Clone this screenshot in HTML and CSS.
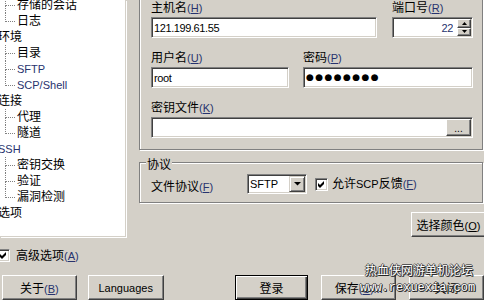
FILE: index.html
```html
<!DOCTYPE html>
<html lang="zh-CN">
<head>
    <meta charset="UTF-8">
    <meta name="viewport" content="width=device-width, initial-scale=1.0">
    <title>WinSCP 登录</title>
    <link rel="stylesheet" href="styles.css">
</head>
<body>
    <div class="dialog">
        <div class="top">
            <div class="tree">
                <div class="tree-inner">
                    <div class="node child">存储的会话</div>
                    <div class="node child last">日志</div>
                    <div class="node">环境</div>
                    <div class="node child">目录</div>
                    <div class="node child"><span class="en blue">SFTP</span></div>
                    <div class="node child last"><span class="en blue">SCP/Shell</span></div>
                    <div class="node">连接</div>
                    <div class="node child">代理</div>
                    <div class="node child last">隧道</div>
                    <div class="node"><span class="en blue">SSH</span></div>
                    <div class="node child">密钥交换</div>
                    <div class="node child">验证</div>
                    <div class="node child last">漏洞检测</div>
                    <div class="node">选项</div>
                </div>
            </div>

            <div class="side">
                <div class="group session">
                    <div class="row">
                        <div class="field host">
                            <label>主机名<span class="k">(<u>H</u>)</span></label>
                            <div class="edit"><input type="text" value="121.199.61.55"></div>
                        </div>
                        <div class="field port">
                            <label>端口号<span class="k">(<u>R</u>)</span></label>
                            <div class="edit">
                                <input type="text" class="num" value="22">
                                <div class="spin">
                                    <span class="spin-btn"><svg width="5" height="3"><polygon points="2.5,0 5,3 0,3" fill="#000"/></svg></span>
                                    <span class="spin-btn"><svg width="5" height="3"><polygon points="0,0 5,0 2.5,3" fill="#000"/></svg></span>
                                </div>
                            </div>
                        </div>
                    </div>
                    <div class="row">
                        <div class="field user">
                            <label>用户名<span class="k">(<u>U</u>)</span></label>
                            <div class="edit"><input type="text" value="root"></div>
                        </div>
                        <div class="field pass">
                            <label>密码<span class="k">(<u>P</u>)</span></label>
                            <div class="edit"><span class="dots">●●●●●●●●</span></div>
                        </div>
                    </div>
                    <div class="row">
                        <div class="field key">
                            <label>密钥文件<span class="k">(<u>K</u>)</span></label>
                            <div class="edit">
                                <input type="text" value="">
                                <span class="browse">...</span>
                            </div>
                        </div>
                    </div>
                </div>

                <div class="group protocol">
                    <div class="legend">协议</div>
                    <div class="proto-row">
                        <div class="proto-label">文件协议<span class="k">(<u>F</u>)</span></div>
                        <div class="combo">
                            <span class="combo-text en">SFTP</span>
                            <span class="drop"><svg width="7" height="4"><polygon points="0,0 7,0 3.5,3.5" fill="#000"/></svg></span>
                        </div>
                        <span class="check proto-check"><svg width="9" height="9"><path d="M1 3 L3 5 L7 1 L7 4 L3 8 L1 6 Z" fill="#000"/></svg></span>
                        <div class="check-label">允许<span class="en">SCP</span>反馈<span class="k">(<u>F</u>)</span></div>
                    </div>
                </div>

                <div class="color-row">
                    <button class="btn">选择颜色<span class="en">(<u>O</u>)</span></button>
                </div>
            </div>
        </div>

        <div class="adv">
            <span class="check"><svg width="9" height="9"><path d="M1 3 L3 5 L7 1 L7 4 L3 8 L1 6 Z" fill="#000"/></svg></span>
            <span class="adv-label">高级选项<span class="k">(<u>A</u>)</span></span>
        </div>

        <div class="buttons">
            <button class="btn about">关于<span class="k">(<u>B</u>)</span></button>
            <button class="btn lang"><span class="en">Languages</span></button>
            <button class="btn default login">登录</button>
            <button class="btn save">保存<span class="k">(<u>S</u>)...</span></button>
            <button class="btn close">关闭</button>
        </div>

        <div class="watermark">
            <div class="wm-title">热血侠网游单机论坛</div>
            <div class="wm-url">www.rexuexia.com</div>
        </div>
    </div>
</body>
</html>
```

FILE: styles.css
```css
body {
    margin: 0;
    font-family: "Liberation Sans", "Noto Sans CJK SC", sans-serif;
    font-size: 12px;
    color: #000;
    background: #d4d0c8;
}
.dialog {
    position: relative;
    width: 484px;
    height: 300px;
    overflow: hidden;
    background: #d4d0c8;
}
.en, .k {
    font-size: 11px;
}
.k, .blue {
    color: #27336e;
}
.top {
    display: flex;
    height: 238px;
}

/* tree */
.tree {
    flex: none;
    width: 125px;
    height: 236px;
    background: #fff;
    border-right: 1px solid #d4d0c8;
    border-bottom: 1px solid #d4d0c8;
    box-shadow: 1px 1px 0 #fff;
    overflow: hidden;
}
.tree-inner {
    margin-top: -3px;
}
.node {
    height: 16px;
    line-height: 16px;
    white-space: nowrap;
    margin-left: -2px;
}
.node.child {
    position: relative;
    margin-left: 0;
    padding-left: 17px;
}
.node.child::before {
    content: "";
    position: absolute;
    left: 5px;
    top: 0;
    width: 9px;
    height: 8px;
    border-left: 1px dotted #808080;
    border-bottom: 1px dotted #808080;
}
.node.child:not(.last)::after {
    content: "";
    position: absolute;
    left: 5px;
    top: 9px;
    bottom: 0;
    border-left: 1px dotted #808080;
}

/* right side */
.side {
    flex: none;
    width: 345px;
    margin-left: 13px;
}
.group {
    box-sizing: border-box;
    width: 344px;
    border: 1px solid #808080;
    box-shadow: 1px 1px 0 #fff, inset 1px 1px 0 #fff;
}
.session {
    margin-top: -10px;
    padding: 9px 9px 11px 11px;
}
.row {
    display: flex;
    justify-content: space-between;
}
.row + .row {
    margin-top: 12px;
}
.field label {
    display: block;
    height: 16px;
    line-height: 16px;
}
.host { width: 226px; }
.port { width: 81px; }
.user { width: 138px; }
.pass { width: 170px; }
.key { width: 322px; }

.edit {
    box-sizing: border-box;
    display: flex;
    height: 21px;
    margin-top: 1px;
    padding: 1px;
    background: #fff;
    border: 1px solid;
    border-color: #808080 #fff #fff #808080;
    box-shadow: inset 1px 1px 0 #404040, inset -1px -1px 0 #d4d0c8;
}
.edit input {
    flex: 1;
    min-width: 0;
    height: 100%;
    margin: 0;
    padding: 0 0 0 1px;
    border: none;
    outline: none;
    background: transparent;
    font-family: "Liberation Sans", sans-serif;
    font-size: 11px;
    letter-spacing: -0.4px;
    color: #000;
}
.edit input.num {
    text-align: right;
    padding-right: 4px;
    color: #27336e;
}
.spin {
    display: flex;
    flex-direction: column;
    width: 14px;
}
.spin-btn {
    flex: 1;
    box-sizing: border-box;
    display: flex;
    align-items: center;
    justify-content: center;
    background: #d4d0c8;
    border: 1px solid;
    border-color: #fff #404040 #404040 #fff;
    box-shadow: inset -1px -1px 0 #808080;
}
.spin-btn svg {
    display: block;
}
.dots {
    padding-left: 1px;
    font-family: "DejaVu Sans", sans-serif;
    font-size: 9px;
    letter-spacing: 1.4px;
    line-height: 17px;
}
.browse {
    box-sizing: border-box;
    width: 25px;
    height: 17px;
    background: #d4d0c8;
    border: 1px solid;
    border-color: #fff #404040 #404040 #fff;
    box-shadow: inset -1px -1px 0 #808080;
    font-size: 10px;
    line-height: 17px;
    text-align: center;
}

/* protocol */
.protocol {
    margin-top: 12px;
    padding: 0 9px 8px 11px;
}
.legend {
    width: fit-content;
    height: 14px;
    margin: -5px 0 0 -5px;
    padding: 0 1px;
    line-height: 14px;
    background: #d4d0c8;
}
.proto-row {
    display: flex;
    align-items: flex-start;
    height: 20px;
    margin-top: 2px;
}
.proto-label {
    width: 96px;
    margin-top: 5px;
    line-height: 16px;
}
.combo {
    box-sizing: border-box;
    display: flex;
    justify-content: space-between;
    width: 60px;
    height: 20px;
    padding: 1px;
    background: #fff;
    border: 1px solid;
    border-color: #808080 #fff #fff #808080;
    box-shadow: inset 1px 1px 0 #404040, inset -1px -1px 0 #d4d0c8;
}
.combo-text {
    padding-left: 1px;
    line-height: 16px;
}
.drop {
    box-sizing: border-box;
    display: flex;
    align-items: center;
    justify-content: center;
    width: 16px;
    height: 16px;
    background: #d4d0c8;
    border: 1px solid;
    border-color: #d4d0c8 #404040 #404040 #d4d0c8;
    box-shadow: inset 1px 1px 0 #fff, inset -1px -1px 0 #808080;
}
.drop svg {
    display: block;
}
.check {
    box-sizing: border-box;
    display: flex;
    align-items: center;
    justify-content: center;
    flex: none;
    width: 13px;
    height: 13px;
    background: #fff;
    border: 1px solid;
    border-color: #808080 #fff #fff #808080;
    box-shadow: inset 1px 1px 0 #404040, inset -1px -1px 0 #d4d0c8;
}
.check svg {
    display: block;
}
.proto-check {
    margin: 4px 0 0 8px;
}
.check-label {
    margin: 2px 0 0 4px;
    line-height: 16px;
}
.color-row {
    margin-top: 9px;
}
.color-row .btn {
    margin-left: 272px;
}

/* buttons */
.btn {
    box-sizing: border-box;
    width: 75px;
    height: 25px;
    margin: 0;
    padding: 0;
    background: #d4d0c8;
    border: 1px solid;
    border-color: #fff #404040 #404040 #fff;
    box-shadow: inset -1px -1px 0 #808080;
    font-family: inherit;
    font-size: 12px;
    color: #000;
}
.btn.default {
    border: 1px solid #000;
    box-shadow: inset 1px 1px 0 #fff, inset -1px -1px 0 #404040, inset -2px -2px 0 #808080;
}
.adv {
    display: flex;
    align-items: center;
    height: 13px;
    margin-top: 11px;
}
.adv .check {
    margin-left: -3px;
}
.adv-label {
    margin-left: 6px;
    line-height: 16px;
}
.buttons {
    display: flex;
    margin-top: 13px;
}
.about { margin-left: 2px; }
.lang { margin-left: 11px; width: 76px; }
.login { margin-left: 71px; width: 74px; }
.save, .close { margin-left: 13px; }

/* overlay watermark */
.watermark {
    position: absolute;
    left: 360px;
    top: 263px;
    color: #fff;
    text-shadow: 1px 1px 0 #222, -1px 0 0 #555, 0 -1px 0 #555, 1px 0 0 #444, 0 1px 0 #444;
    pointer-events: none;
}
.wm-title {
    margin-left: 5px;
    font-size: 12px;
    line-height: 16px;
}
.wm-url {
    margin-top: 2px;
    font-family: "Liberation Mono", monospace;
    font-size: 12px;
    line-height: 14px;
}
```
